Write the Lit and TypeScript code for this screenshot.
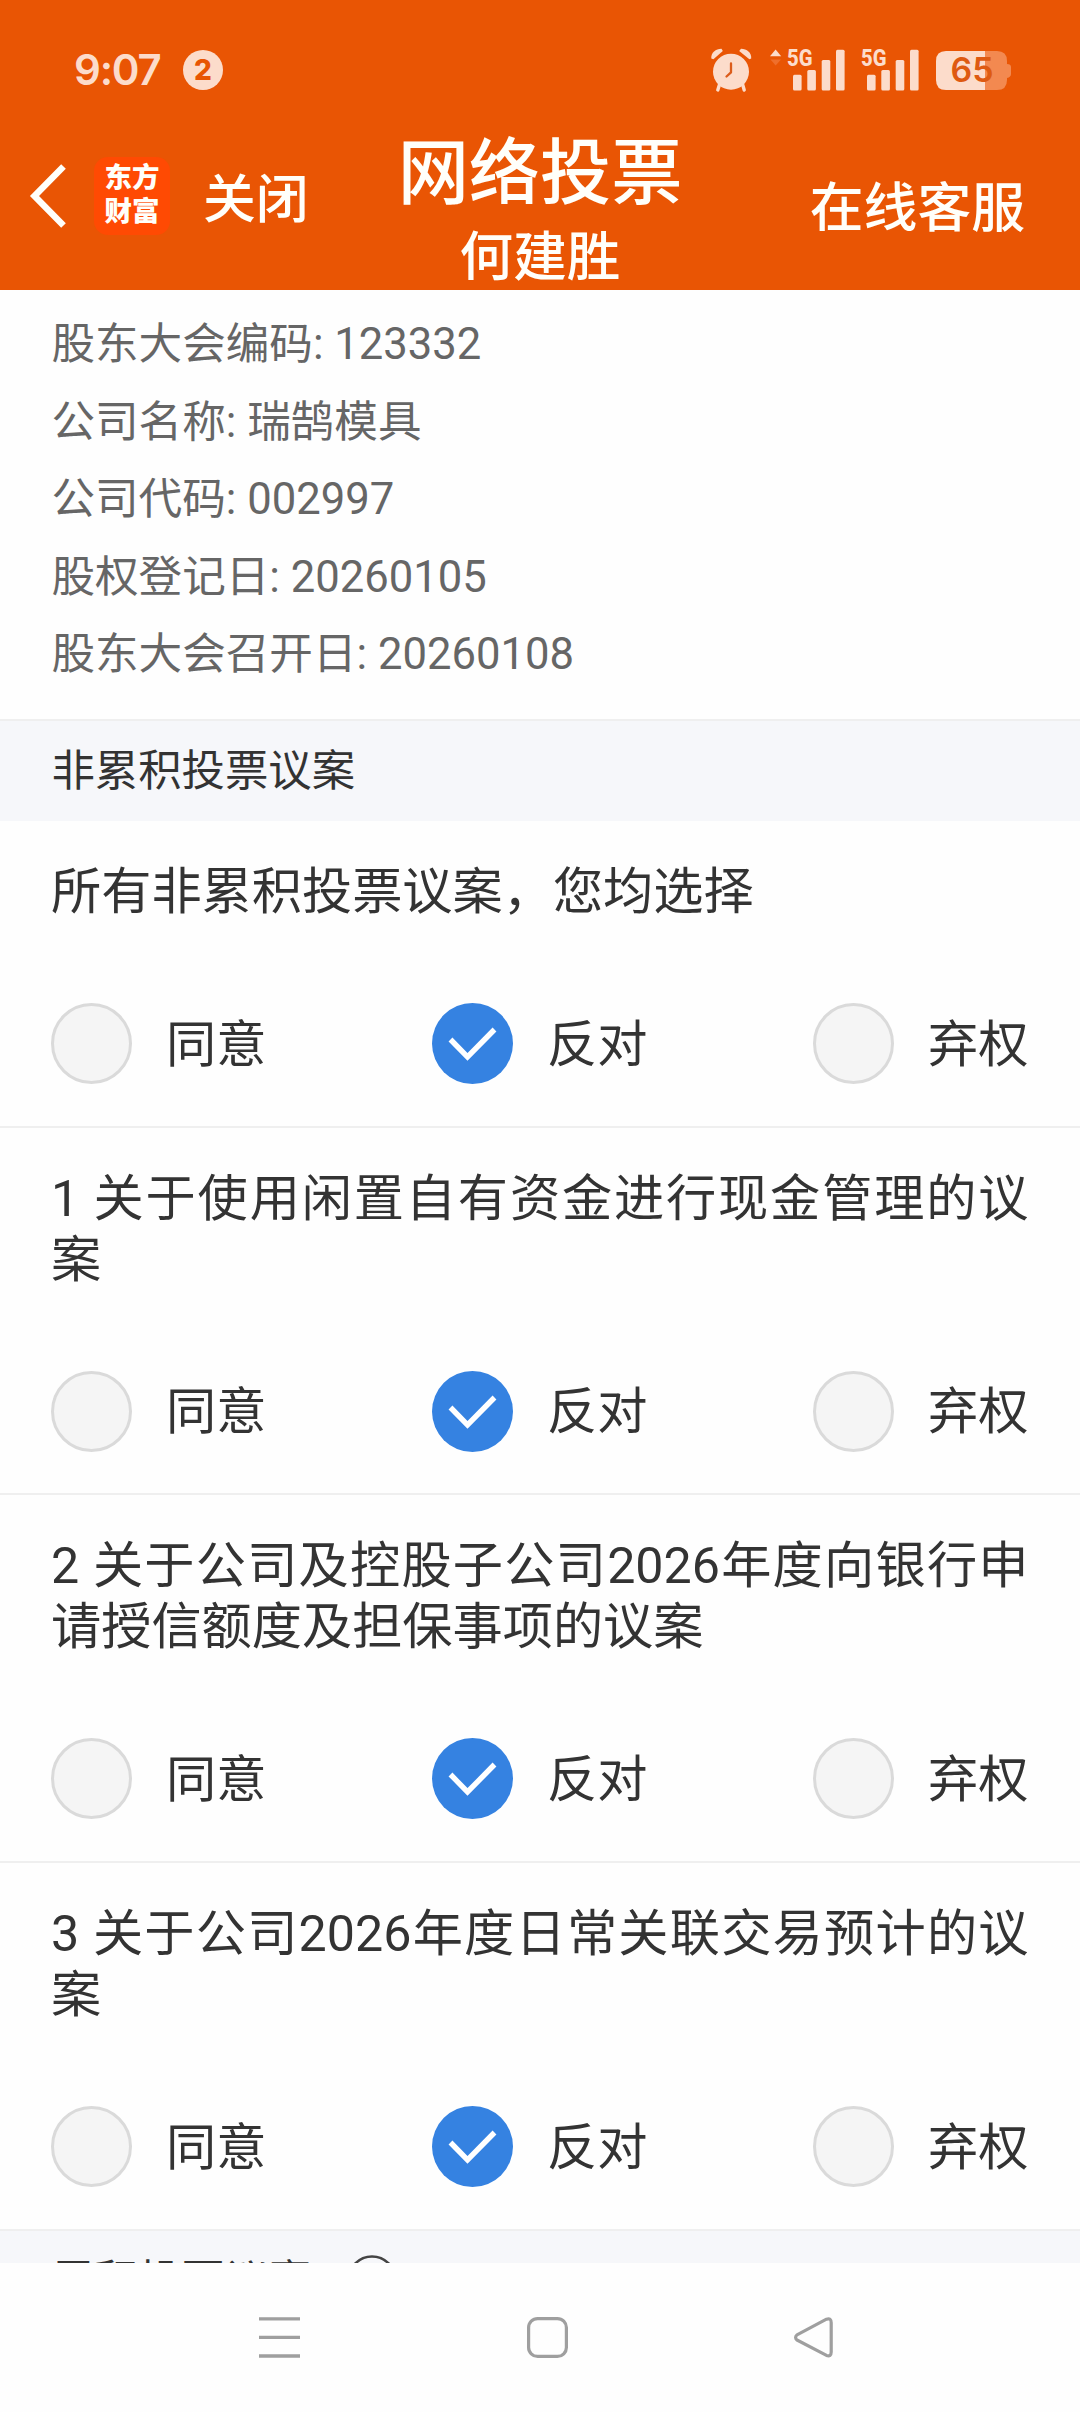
import { LitElement, html, css, svg } from "lit";
import { customElement, property } from "lit/decorators.js";

const OPTIONS = ["同意", "反对", "弃权"];

const MEETING = [
  ["股东大会编码", "123332"],
  ["公司名称", "瑞鹄模具"],
  ["公司代码", "002997"],
  ["股权登记日", "20260105"],
  ["股东大会召开日", "20260108"],
];

const PROPOSALS = [
  "1 关于使用闲置自有资金进行现金管理的议案",
  "2 关于公司及控股子公司2026年度向银行申请授信额度及担保事项的议案",
  "3 关于公司2026年度日常关联交易预计的议案",
];

@customElement("status-bar")
class StatusBar extends LitElement {
  static styles = css`
    :host { display: flex; align-items: center; height: 120px; padding: 20px 68px 0 74px; box-sizing: border-box; color: #fcdccb; }
    .time { width: 89px; font-family: Inter, sans-serif; font-size: 42px; font-weight: 600; line-height: 50px; letter-spacing: -1.2px; white-space: nowrap; }
    .badge { width: 40px; height: 40px; border-radius: 50%; background: #fcdccb; color: #e85503; margin-left: 20px; font-family: Inter, sans-serif; font-size: 28px; font-weight: 800; line-height: 41px; text-align: center; }
    .icons { margin-left: auto; display: block; }
    .level { font-family: Inter, sans-serif; }
  `;

  private signal(x: number) {
    return svg`
      <text x=${x} y="66.3" font-size="24.5" font-weight="800" textLength="25.5" lengthAdjust="spacingAndGlyphs" fill="#fcdccb">5G</text>
      <rect x=${x + 6} y="74.7" width="8.6" height="15.8" rx="1.5"/>
      <rect x=${x + 20.3} y="70" width="8.6" height="20.5" rx="1.5"/>
      <rect x=${x + 34.7} y="60" width="8.6" height="30.5" rx="1.5"/>
      <rect x=${x + 49} y="49.7" width="8.6" height="40.8" rx="1.5"/>`;
  }

  render() {
    return html`
      <span class="time">9:07</span>
      <span class="badge">2</span>
      <svg class="icons" width="302" height="60" viewBox="710 40 302 60" fill="#fcdccb">
        <circle cx="731" cy="71.7" r="18"/>
        <path d="M711.3 58.5 C710.8 52.5 716 48.7 721.5 48.8 L722.8 51 L713.4 59.3Z"/>
        <path d="M751.2 58.5 C751.7 52.5 746.5 48.7 741 48.8 L739.2 51 L749.4 59.3Z"/>
        <path d="M720 83 L717.8 90 M742.2 83 L744.2 90" stroke="#fcdccb" stroke-width="3.4" stroke-linecap="round"/>
        <path d="M731 63.5 V72.3 L726.5 76.5" fill="none" stroke="#dc5c1b" stroke-width="2.3" stroke-linecap="round" stroke-linejoin="round"/>
        <path d="M770 56.3 L775.6 49.4 L781.2 56.3Z"/>
        <path d="M770.5 59.5 H781 L775.6 65.5Z" fill="#ef6f2b"/>
        ${this.signal(787)}
        ${this.signal(861)}
        <path d="M985 51 H997 Q1007 51 1007 61 V64 Q1011 64 1011 67 V74 Q1011 77 1007 78 V80 Q1007 90 997 90 H985Z" fill="#f38950"/>
        <path d="M985 51 H946 Q936 51 936 61 V80 Q936 90 946 90 H985Z"/>
        <text class="level" x="950.5" y="82.4" font-size="34" font-weight="600" textLength="43" lengthAdjust="spacingAndGlyphs" fill="#de5a12">65</text>
      </svg>`;
  }
}

@customElement("title-bar")
class TitleBar extends LitElement {
  static styles = css`
    :host { display: grid; grid-template-columns: 1fr auto 1fr; height: 170px; color: #fffffa; font-weight: 500; }
    .left { display: flex; align-items: center; height: 152px; padding-left: 29px; }
    .logo { width: 76px; height: 78px; border-radius: 14px; background: #ff4a03; margin-left: 27px; display: flex; flex-direction: column; align-items: center; justify-content: center; font-size: 27.5px; font-weight: 800; line-height: 34px; padding-bottom: 2px; box-sizing: border-box; }
    .close { font-size: 52.8px; line-height: 60px; margin: 7px 0 0 33px; }
    .center { display: flex; flex-direction: column; align-items: center; padding-top: 14px; }
    .title { font-size: 71.2px; line-height: 80px; }
    .name { font-size: 53.6px; line-height: 64px; margin-top: 12px; }
    .service { justify-self: end; font-size: 53.8px; line-height: 60px; padding: 59px 55px 0 0; }
  `;

  render() {
    return html`
      <div class="left">
        <svg width="38" height="66" viewBox="0 0 38 66" fill="none" stroke="#fffffa" stroke-width="6.5"><path d="M34.5 3.5 L5.5 33 L34.5 62.5"/></svg>
        <div class="logo"><span>东方</span><span>财富</span></div>
        <span class="close">关闭</span>
      </div>
      <div class="center"><span class="title">网络投票</span><span class="name">何建胜</span></div>
      <span class="service">在线客服</span>`;
  }
}

@customElement("vote-item")
class VoteItem extends LitElement {
  @property() heading = "";
  @property({ type: Number }) selected = 1;

  static styles = css`
    :host { display: block; padding: 40px 51.5px 41.7px 51px; border-bottom: 2px solid #efefef; color: #333; font-size: 50.2px; }
    .heading { line-height: 61px; text-align: justify; }
    .options { display: flex; justify-content: space-between; margin-top: 81px; }
    .option { display: flex; align-items: center; gap: 34px; height: 81px; }
    .label { line-height: 61px; padding-top: 1px; }
    .radio { width: 81px; height: 81px; box-sizing: border-box; border-radius: 50%; border: 3px solid #dadada; background: #f5f5f5; }
    .check { display: block; }
  `;

  render() {
    return html`
      <div class="heading">${this.heading}</div>
      <div class="options">
        ${OPTIONS.map((label, i) => html`
          <div class="option">
            ${i === this.selected
              ? html`<svg class="check" width="81" height="81" viewBox="0 0 81 81"><circle cx="40.5" cy="40.5" r="40.5" fill="#3582e1"/><path d="M18.5 36.5 L35.5 54 L62.5 26.5" fill="none" stroke="#fff" stroke-width="5.4"/></svg>`
              : html`<span class="radio"></span>`}
            <span class="label">${label}</span>
          </div>`)}
      </div>`;
  }
}

@customElement("app-root")
class AppRoot extends LitElement {
  static styles = css`
    :host { display: flex; flex-direction: column; width: 1080px; height: 2412px; overflow: hidden; background: #fefefe; font-family: Roboto, "Noto Sans CJK SC", sans-serif; }
    .header { flex: none; height: 290px; background: #e95504; }
    .content { flex: none; height: 1973px; overflow: hidden; }
    .info { height: 429px; box-sizing: border-box; padding: 16px 51.4px 0; font-size: 43.6px; line-height: 77.6px; color: #666; }
    .section { display: flex; align-items: flex-start; height: 100px; box-sizing: border-box; background: #f6f7fa; color: #333; font-size: 43.4px; line-height: 60px; padding: 21px 51.4px 0; }
    .first { height: 102px; border-top: 2px solid #efefef; }
    .help { margin: 3px 0 0 35px; }
    .nav { flex: 1; display: flex; align-items: flex-start; padding: 52px 0 0 257px; }
    .home { margin-left: 223px; }
    .back { margin-left: 221px; }
  `;

  render() {
    return html`
      <div class="header"><status-bar></status-bar><title-bar></title-bar></div>
      <div class="content">
        <div class="info">${MEETING.map(([k, v]) => html`<div>${k}: ${v}</div>`)}</div>
        <div class="section first">非累积投票议案</div>
        <vote-item heading="所有非累积投票议案，您均选择"></vote-item>
        ${PROPOSALS.map((p) => html`<vote-item .heading=${p}></vote-item>`)}
        <div class="section">
          <span>累积投票议案</span>
          <svg class="help" width="50" height="50" viewBox="0 0 50 50" fill="none" stroke="#444" stroke-width="2.6"><circle cx="25" cy="25" r="23.5"/><path d="M18 20 C18 11 32 11 32 20 C32 25 25 25 25 31 M25 35 V38"/></svg>
        </div>
      </div>
      <div class="nav">
        <svg width="45" height="45" viewBox="0 0 45 45" stroke="#9f9f9f" stroke-width="3.4"><path d="M2 3.9 H43 M2 22.4 H43 M2 41 H43"/></svg>
        <svg class="home" width="45" height="45" viewBox="0 0 45 45" fill="none" stroke="#9f9f9f" stroke-width="3.2"><rect x="3.6" y="3.6" width="37.8" height="37.8" rx="9"/></svg>
        <svg class="back" width="45" height="45" viewBox="0 0 45 45" fill="none" stroke="#9f9f9f" stroke-width="3.2" stroke-linejoin="round"><path d="M35.5 4.2 L6 19.8 Q3.2 22.4 6 25 L35.5 40.4 Q40.2 42 40.2 37 V7.8 Q40.2 2.6 35.5 4.2Z"/></svg>
      </div>`;
  }
}
